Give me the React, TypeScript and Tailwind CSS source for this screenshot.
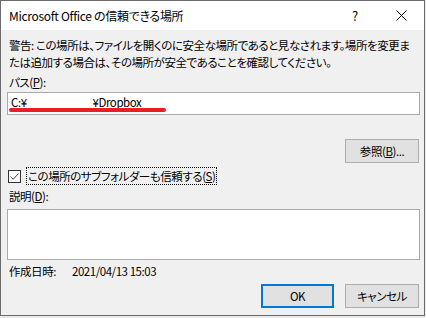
import React from "react";

const font = "[font-family:'Noto_Sans_CJK_JP','Noto_Sans',sans-serif] [font-feature-settings:'palt']";

function Btn({ label, primary }: { label: React.ReactNode; primary?: boolean }) {
    return (
        <div
            className={
                "flex items-center justify-center h-[24px] bg-[#e1e1e1] text-black " +
                (primary ? "border-2 border-[#0078d7]" : "border border-[#adadad]")
            }
        >
            {label}
        </div>
    );
}

export default function App() {
    return (
        <div className={"w-[426px] h-[318px] bg-[#e8e8e8] " + font}>
            <div className="w-[425px] h-[316px] border border-[#6b6b6b] flex flex-col bg-[#f0f0f0]">
                {/* title bar */}
                <div className="h-[29px] bg-white flex items-center">
                    <div className="flex-1 pl-[8px] text-[12px] tracking-[-0.3px] text-black leading-none">
                        Microsoft Office の信頼できる場所
                    </div>
                    <div className="w-[46px] h-full flex items-center justify-center text-[13px] text-black">
                        ?
                    </div>
                    <div className="w-[46px] h-full flex items-center justify-center">
                        <svg width="11" height="11" viewBox="0 0 11 11">
                            <path d="M0.5 0.5 L10.5 10.5 M10.5 0.5 L0.5 10.5" stroke="#000" strokeWidth="1" />
                        </svg>
                    </div>
                </div>

                {/* body */}
                <div className="flex-1 flex flex-col pl-[6px] pr-[4px] pt-[7px] text-[11.5px] tracking-[-0.45px] leading-[17px] text-black">
                    <div className="pl-[2px] whitespace-nowrap">
                        警告: この場所は、ファイルを開くのに安全な場所であると見なされます。場所を変更ま
                    </div>
                    <div className="pl-[2px] whitespace-nowrap">
                        たは追加する場合は、その場所が安全であることを確認してください。
                    </div>
                    <div className="pl-[2px] mt-[3px]">
                        パス(<span className="underline">P</span>):
                    </div>
                    <div className="relative mt-[1px] h-[23px] bg-white border border-[#a9a9a9] flex items-center pl-[3px] pb-[3px]">
                        <span>C:¥</span>
                        <span className="ml-[66px]">¥Dropbox</span>
                        <div className="absolute left-[1px] top-[15px] w-[157px] h-[4px] rounded-full bg-[#ea1c24]" />
                    </div>
                    <div className="mt-[24px] self-end mr-[1px] w-[74px]">
                        <Btn label={<span>参照(<span className="underline">B</span>)...</span>} />
                    </div>
                    <div className="mt-[4px] h-[18px] flex items-center">
                        <div className="ml-[1px] w-[13px] h-[13px] bg-white border border-[#333333] flex items-center justify-center">
                            <svg width="11" height="11" viewBox="0 0 11 11">
                                <path d="M1.5 5.5 L4.2 8.3 L9.5 2.5" stroke="#444" strokeWidth="1" fill="none" />
                            </svg>
                        </div>
                        <div className="ml-[5px] h-[18px] px-[1px] flex items-center border border-dotted border-black">
                            この場所のサブフォルダーも信頼する(<span className="underline">S</span>)
                        </div>
                    </div>
                    <div className="pl-[2px] mt-[3px]">
                        説明(<span className="underline">D</span>):
                    </div>
                    <div className="mt-[4px] h-[51px] bg-white border border-[#a9a9a9]" />
                    <div className="pl-[2px] mt-[3px] flex">
                        <span>作成日時:</span>
                        <span className="ml-[16px]">2021/04/13 15:03</span>
                    </div>
                    <div className="mt-[4px] flex justify-end gap-[11px] mr-[1px]">
                        <div className="w-[73px]">
                            <Btn label="OK" primary />
                        </div>
                        <div className="w-[74px]">
                            <Btn label="キャンセル" />
                        </div>
                    </div>
                </div>
            </div>
        </div>
    );
}
